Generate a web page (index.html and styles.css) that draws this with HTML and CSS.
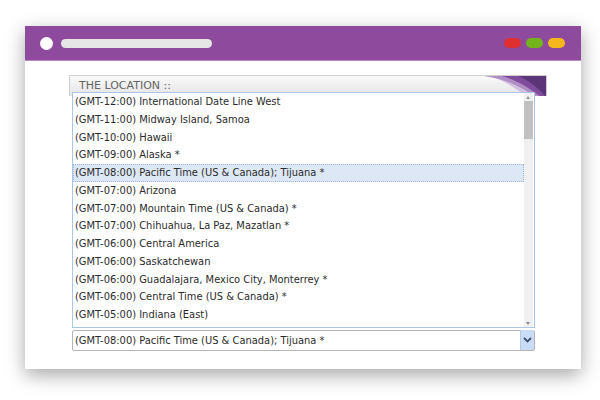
FILE: index.html
```html
<!DOCTYPE html>
<html lang="en">
<head>
  <meta charset="UTF-8" />
  <title>The Location</title>
  <link rel="stylesheet" href="styles.css">
</head>
<body>

  <div class="ventana">
    <!-- barra de titulo -->
    <div class="barra">
      <span class="punto"></span>
      <span class="direccion"></span>
      <div class="botones">
        <span class="btn rojo"></span>
        <span class="btn verde"></span>
        <span class="btn amarillo"></span>
      </div>
    </div>

    <div class="contenido">
      <div class="panel">
        <div class="panel-titulo">
          THE LOCATION ::
          <svg class="onda" viewBox="0 0 80 22" preserveAspectRatio="none">
            <path d="M0 0 H80 V22 H62 C50 14 38 4 24 0 Z" fill="#d4c0de"/>
            <path d="M18 0 H80 V22 H70 C56 12 40 3 18 0 Z" fill="#b08dc4"/>
            <path d="M36 0 H80 V22 H75 C64 13 52 5 36 0 Z" fill="#7f4d9c"/>
            <path d="M52 0 H80 V22 C72 12 62 4 52 0 Z" fill="#5c3478"/>
          </svg>
        </div>

        <div class="lista">
          <div class="opciones">
            <div class="opcion">(GMT-12:00) International Date Line West</div>
            <div class="opcion">(GMT-11:00) Midway Island, Samoa</div>
            <div class="opcion">(GMT-10:00) Hawaii</div>
            <div class="opcion">(GMT-09:00) Alaska *</div>
            <div class="opcion activa">(GMT-08:00) Pacific Time (US &amp; Canada); Tijuana *</div>
            <div class="opcion">(GMT-07:00) Arizona</div>
            <div class="opcion">(GMT-07:00) Mountain Time (US &amp; Canada) *</div>
            <div class="opcion">(GMT-07:00) Chihuahua, La Paz, Mazatlan *</div>
            <div class="opcion">(GMT-06:00) Central America</div>
            <div class="opcion">(GMT-06:00) Saskatchewan</div>
            <div class="opcion">(GMT-06:00) Guadalajara, Mexico City, Monterrey *</div>
            <div class="opcion">(GMT-06:00) Central Time (US &amp; Canada) *</div>
            <div class="opcion">(GMT-05:00) Indiana (East)</div>
          </div>
          <div class="scroll">
            <span class="flecha arriba"></span>
            <span class="pista"><span class="pulgar"></span></span>
            <span class="flecha abajo"></span>
          </div>
        </div>

        <div class="selector">
          <span class="valor">(GMT-08:00) Pacific Time (US &amp; Canada); Tijuana *</span>
          <span class="desplegar">
            <svg width="9" height="6" viewBox="0 0 9 6"><path d="M1 1 L4.5 4.5 L8 1" stroke="#3d4f6e" stroke-width="1.8" fill="none"/></svg>
          </span>
        </div>
      </div>
    </div>
  </div>

</body>
</html>
```

FILE: styles.css
```css
html, body {
  height: 100%;
}

body {
  margin: 0;
  padding-top: 26px;
  box-sizing: border-box;
  background: #fff;
  font-family: "DejaVu Sans Condensed", "DejaVu Sans", sans-serif;
}

.ventana {
  margin-left: 25px;
  width: 556px;
  height: 343px;
  background: #fff;
  box-shadow: 0 6px 18px rgba(0, 0, 0, 0.35);
  display: flex;
  flex-direction: column;
}

.barra {
  height: 35px;
  background: #8e4b9e;
  border-bottom: 1px solid #b98bc6;
  display: flex;
  align-items: center;
  padding: 0 16px 0 15px;
  box-sizing: border-box;
}

.punto {
  width: 13px;
  height: 13px;
  border-radius: 50%;
  background: #fff;
}

.direccion {
  width: 151px;
  height: 9px;
  border-radius: 5px;
  background: #e6e6e6;
  margin-left: 8px;
}

.botones {
  margin-left: auto;
  display: flex;
  gap: 5px;
}

.btn {
  width: 17px;
  height: 10px;
  border-radius: 5px;
}

.rojo { background: #de3030; }
.verde { background: #73b41c; }
.amarillo { background: #f5b71b; }

.contenido {
  padding: 14px 0 0 44px;
}

.panel {
  width: 478px;
}

.panel-titulo {
  position: relative;
  height: 21px;
  box-sizing: border-box;
  padding: 3px 0 0 9px;
  font-family: "DejaVu Sans", sans-serif;
  font-size: 11px;
  color: #666;
  border: 1px solid #cfcfcf;
  border-bottom: none;
  background: linear-gradient(#fafafa, #e4e4e4);
  overflow: hidden;
}

.onda {
  position: absolute;
  right: 0;
  top: 0;
  width: 80px;
  height: 21px;
}

.lista {
  position: relative;
  margin: -4px 0 0 3px;
  width: 463px;
  height: 236px;
  box-sizing: border-box;
  border: 1px solid #a9c5e8;
  background: #fff;
  display: flex;
}

.opciones {
  flex: 1;
}

.opcion {
  height: 17.75px;
  line-height: 17.75px;
  padding-left: 2px;
  font-size: 11px;
  color: #2b2b2b;
  white-space: nowrap;
  box-sizing: border-box;
}

.opcion.activa {
  background: #dde7f6;
  border: 1px dotted #9fb5d9;
  line-height: 15.75px;
  padding-left: 1px;
}

.scroll {
  width: 9px;
  margin-right: 1px;
  background: #f0f0f0;
  display: flex;
  flex-direction: column;
}

.flecha {
  height: 8px;
  position: relative;
}

.flecha::after {
  content: "";
  position: absolute;
  left: 2px;
  top: 3px;
  border-left: 2.5px solid transparent;
  border-right: 2.5px solid transparent;
}

.arriba::after { border-bottom: 3px solid #999; }
.abajo::after { border-top: 3px solid #888; }

.pista {
  flex: 1;
}

.pulgar {
  display: block;
  height: 38px;
  background: #c1c1c1;
}

.selector {
  margin: 2px 0 0 3px;
  width: 463px;
  height: 21px;
  box-sizing: border-box;
  border: 1px solid #b5b5b5;
  border-radius: 2px;
  display: flex;
  align-items: center;
  font-size: 11px;
  color: #2b2b2b;
}

.valor {
  flex: 1;
  padding-left: 2px;
}

.desplegar {
  width: 13px;
  height: 20px;
  margin-top: -1px;
  background: #cadcf5;
  border-left: 1px solid #b3c9e8;
  display: flex;
  align-items: center;
  justify-content: center;
}
```
